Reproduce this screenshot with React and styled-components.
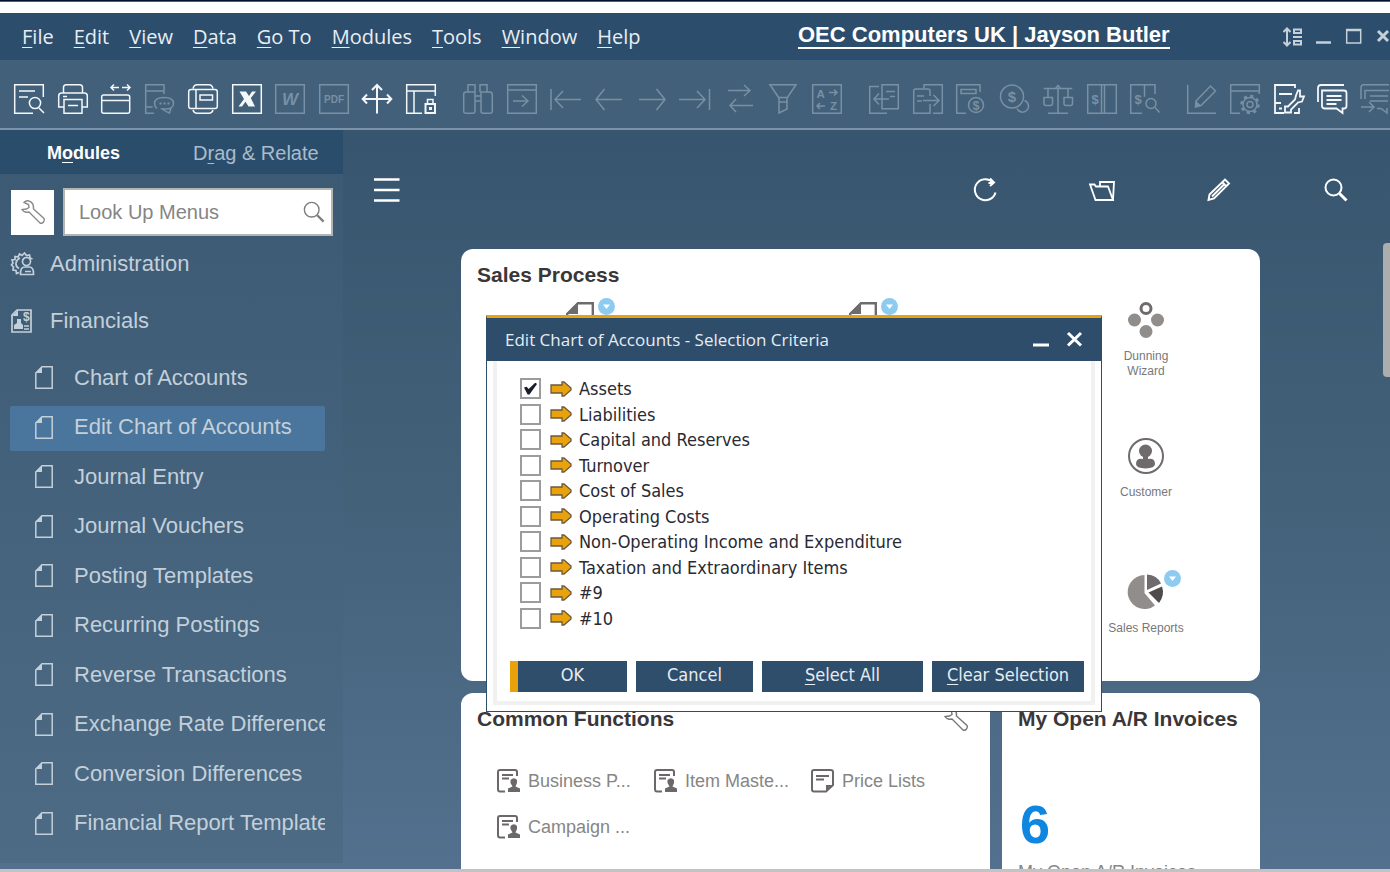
import React, { useState } from 'react';
import styled, { createGlobalStyle } from 'styled-components';

const GlobalStyle = createGlobalStyle`
  * {
    box-sizing: border-box;
  }

  body {
    margin: 0;
    font-family: 'Liberation Sans', Arial, sans-serif;
  }

  button {
    padding: 0;
    border: 0;
    background: none;
    color: inherit;
    font: inherit;
    cursor: pointer;
  }

  ul {
    margin: 0;
    padding: 0;
    list-style: none;
  }

  u {
    text-decoration-thickness: 1px;
    text-underline-offset: 3px;
  }
`;

const Page = styled.div`
  position: relative;
  display: flex;
  flex-direction: column;
  height: 100vh;
  overflow: hidden;
  border-bottom: 3px solid #c3c3c3;
`;

const TitleEdge = styled.div`
  flex: none;
  height: 13px;
  border-top: 1px solid #03122b;
  background: linear-gradient(#1f6cb0 1px, #ffffff 1px);
`;

const MenuBar = styled.header`
  display: flex;
  flex: none;
  align-items: center;
  justify-content: space-between;
  height: 47px;
  padding-left: 22px;
  background: #2c4d6c;
  color: #e9eef3;
`;

const Menus = styled.nav`
  display: flex;
  gap: 20px;
  width: 776px;
  font-family: 'Open Sans', 'Noto Sans', sans-serif;
  font-size: 20px;
  line-height: 28px;
`;

const Company = styled.a`
  margin-right: auto;
  padding-bottom: 2px;
  border-bottom: 2px solid #ffffff;
  color: #ffffff;
  font-size: 22px;
  font-weight: bold;
  line-height: 20px;
  text-decoration: none;
`;

const WindowControls = styled.div`
  display: flex;
  gap: 14px;
  margin-right: -2px;
  color: #c6d0d9;
`;

const Toolbar = styled.div`
  display: flex;
  flex: none;
  gap: 27px;
  height: 70px;
  padding: 24px 0 0 14px;
  overflow: hidden;
  border-bottom: 2px solid #7c92a8;
  background: #426079;
`;

const ToolGroup = styled.div`
  display: flex;
  flex: none;
  justify-content: space-between;
  width: ${({ $width }) => $width}px;
`;

const ToolButton = styled.button`
  width: 30px;
  height: 30px;
  color: ${({ disabled }) => (disabled ? '#7890a5' : '#f4f7fa')};
`;

const Svg = styled.svg`
  display: block;
  fill: none;
  stroke: currentColor;
  stroke-width: ${({ $weight }) => $weight || 1.5};
  overflow: visible;

  text {
    fill: currentColor;
    stroke: none;
    font-family: 'Liberation Sans', sans-serif;
    font-weight: bold;
  }

  .solid {
    fill: currentColor;
    stroke: none;
  }
`;

const Workspace = styled.div`
  display: flex;
  flex: 1;
  min-height: 0;
  background: linear-gradient(#38556f, #436179 50%, #53718e);
`;

const Sidebar = styled.aside`
  flex: none;
  width: 343px;
  margin-bottom: 6px;
  overflow: hidden;
  background: linear-gradient(#3c5973, #44627c 50%, #4d6b84);
`;

const Tabs = styled.div`
  display: flex;
  gap: 73px;
  height: 44px;
  padding: 2px 0 0 47px;
  background: #2b4d6c;
`;

const Tab = styled.button`
  color: ${({ $active }) => ($active ? '#ffffff' : '#a9bccd')};
  font-size: ${({ $active }) => ($active ? 18 : 20)}px;
  font-weight: ${({ $active }) => ($active ? 'bold' : 'normal')};
`;

const Lookup = styled.div`
  display: flex;
  align-items: center;
  gap: 9px;
  padding: 14px 10px 0 11px;
`;

const WrenchButton = styled.button`
  display: grid;
  place-items: center;
  width: 43px;
  height: 45px;
  background: #ffffff;
  color: #8a8a8a;
`;

const SearchField = styled.label`
  display: flex;
  flex: 1;
  align-items: center;
  min-width: 0;
  height: 48px;
  padding: 0 6px 0 14px;
  border: 2px solid #b5b5b0;
  background: #ffffff;
  color: #7d7d7d;
`;

const SearchInput = styled.input`
  flex: 1;
  min-width: 0;
  padding: 0;
  border: 0;
  outline: 0;
  background: none;
  font: 20px 'Liberation Sans', Arial, sans-serif;

  &::placeholder {
    color: #858585;
    opacity: 1;
  }
`;

const ModuleLink = styled.a`
  display: flex;
  align-items: center;
  gap: 15px;
  height: 57px;
  padding: 0 0 2px 11px;
  color: #c3d0da;
  font-size: 22px;
  text-decoration: none;
`;

const SubMenu = styled.ul`
  display: flex;
  flex-direction: column;
  justify-content: space-between;
  height: 491px;
  margin: 6px 18px 0 10px;
`;

const SubLink = styled.a`
  display: flex;
  align-items: center;
  gap: 21px;
  height: 45px;
  padding: 0 0 2px 25px;
  overflow: hidden;
  border-radius: 2px;
  background: ${({ $active }) => ($active ? '#4a759c' : 'transparent')};
  color: #c3d0da;
  font-size: 22px;
  text-decoration: none;
  white-space: nowrap;
`;

const Dashboard = styled.main`
  display: flex;
  flex: 1;
  flex-direction: column;
  min-width: 0;
`;

const DashboardBar = styled.div`
  display: flex;
  flex: none;
  align-items: center;
  gap: 93px;
  height: 119px;
  padding: 0 35px 0 31px;
  color: #ffffff;

  button:first-child {
    margin-right: auto;
  }
`;

const Widgets = styled.div`
  display: grid;
  flex: none;
  grid-template-columns: 1fr 258px;
  gap: 12px;
  padding: 0 123px 0 118px;
`;

const Widget = styled.section`
  grid-column: ${({ $wide }) => ($wide ? '1 / -1' : 'auto')};
  height: ${({ $wide }) => ($wide ? 432 : 220)}px;
  padding: 14px 16px 0;
  border-radius: 12px;
  background: #ffffff;
`;

const WidgetHeader = styled.div`
  display: flex;
  align-items: center;
  justify-content: space-between;
  height: 24px;
  padding-right: 6px;
  color: #777777;
`;

const WidgetTitle = styled.h2`
  margin: 0;
  color: #3b3638;
  font-size: 21px;
  line-height: 24px;
  white-space: nowrap;
`;

const ProcessGrid = styled.div`
  display: grid;
  grid-template-columns: repeat(3, 90px);
  grid-auto-rows: 136px;
  justify-content: space-between;
  padding: 15px 53px 0 58px;
`;

const ProcessItem = styled.a`
  position: relative;
  display: flex;
  flex-direction: column;
  grid-column: ${({ $column }) => $column};
  align-items: center;
  gap: 11px;
  color: #6f6a6b;
  font-size: 12px;
  line-height: 15px;
  text-align: center;
  text-decoration: none;
`;

const ProcessLabel = styled.span`
  width: ${({ $narrow }) => ($narrow ? '50px' : 'auto')};
  color: #77787a;
  white-space: ${({ $narrow }) => ($narrow ? 'normal' : 'nowrap')};
`;

const Badge = styled.span`
  position: absolute;
  top: -4px;
  right: 10px;
`;

const Shortcuts = styled.ul`
  display: grid;
  grid-template-columns: repeat(3, 157px);
  grid-auto-rows: 46px;
  padding: 28px 0 0 20px;
`;

const Shortcut = styled.a`
  display: flex;
  align-items: center;
  gap: 8px;
  height: 44px;
  color: #868686;
  font-size: 18px;
  text-decoration: none;
  white-space: nowrap;

  svg {
    color: #6c686a;
  }
`;

const Count = styled.div`
  margin-top: 60px;
  padding-left: 2px;
  color: #0f87e0;
  font-size: 54px;
  font-weight: bold;
  line-height: 66px;
`;

const CountLabel = styled.div`
  margin-top: 4px;
  color: #868686;
  font-size: 18px;
  line-height: 22px;
`;

const ScrollTrack = styled.div`
  flex: none;
  width: 7px;
  padding-top: 113px;
`;

const ScrollThumb = styled.div`
  height: 134px;
  border-radius: 4px 0 0 4px;
  background: #acaeae;
`;

const Dialog = styled.form`
  position: absolute;
  top: 315px;
  left: 486px;
  width: 616px;
  border: 1px solid #2c4d6c;
  border-top: 3px solid #e9a20c;
  background: #ffffff;
`;

const DialogHeader = styled.div`
  display: flex;
  align-items: center;
  gap: 15px;
  height: 43px;
  padding: 0 18px;
  background: #2d4d6b;
  color: #ffffff;
`;

const DialogTitle = styled.h1`
  margin: 0 auto 0 0;
  color: #e6ecf2;
  font: 17px 'Open Sans', 'Noto Sans', sans-serif;
`;

const DialogBody = styled.div`
  margin: 0 6px 6px;
  padding: 17px 7px 9px 13px;
  border: 4px solid #f1f1f1;
  border-top: 0;
  font-family: 'DejaVu Sans Condensed', 'Noto Sans', sans-serif;
  font-size: 18px;
`;

const CriteriaList = styled.ul`
  display: flex;
  flex-direction: column;
  justify-content: space-between;
  height: 251px;
  margin-left: 10px;
`;

const Criterion = styled.label`
  display: flex;
  align-items: center;
  height: 21px;
  color: #2a2a33;

  svg {
    margin: 0 7px 0 9px;
  }
`;

const CheckBox = styled.input`
  appearance: none;
  display: grid;
  place-items: center;
  width: 21px;
  height: 21px;
  margin: 0;
  border: 2px solid #9c9c9c;
  background: #ffffff;

  &:checked::before {
    content: '';
    width: 13px;
    height: 12px;
    background: #1a1d2b;
    clip-path: polygon(0 42%, 20% 35%, 36% 54%, 88% 0, 100% 12%, 42% 100%, 28% 100%);
  }
`;

const DialogActions = styled.div`
  display: grid;
  grid-template-columns: 117px 117px 161px 152px;
  gap: 9px;
  margin-top: 32px;
`;

const ActionButton = styled.button`
  height: 31px;
  padding-bottom: 3px;
  border-left: ${({ $primary }) => ($primary ? '8px solid #e9a20c' : '0')};
  background: #2e4e6c;
  color: #e6ecf2;
  font-size: 18px;
  line-height: 28px;
`;

const Mnemonic = ({ text, at = 0 }) => (
  <>
    {text.slice(0, at)}
    <u>{text[at]}</u>
    {text.slice(at + 1)}
  </>
);

const icons = {
  preview: (
    <>
      <path d="M29.3 13V.7H.7v28.6H19M5 7h16M5 13h9M25 24l5 5" />
      <circle cx="21" cy="19" r="5.6" />
    </>
  ),
  print: (
    <path d="M5.5 9V3.5q0-2.8 2.8-2.8h13.4q2.8 0 2.8 2.8V9M6 23H.7V12q0-3 3-3h22.6q3 0 3 3v11H24M6 15.5h18v13.8H6zM10 21.5h10M5 12.5h4" />
  ),
  resize: (
    <path d="M.7 28V13q0-2 2-2h24q2 0 2 2v14q0 2.3-2 2.3h-24q-2 0-2-2M.7 16.5h28M10 3.5h8M13 .5l-3 3 3 3M21 3.5h8M26 .5l3 3-3 3" />
  ),
  message: (
    <>
      <path d="M19 10V.7H.7v28.6H9M.7 7h18M.7 23h7M12 24.5q-2.5-2-2.5-5 0-6 9.5-6t9.5 6-9.5 5.5h-2q2 1.5 7.5 4l1.5-5" />
      <path d="M14.5 19.5h2M18.5 19.5h2M22.5 19.5h2" strokeWidth="2" />
    </>
  ),
  fax: (
    <path d="M5 4.5q1-3.8 4-3.8h12q3 0 4 3.8M5 26q1 3.3 4 3.3h12q3 0 4-3.3M8 5.5H3Q.7 5.5.7 7.8v14.4q0 2.3 2.3 2.3h5zM8 5.5h19q2.3 0 2.3 2.3v14.4q0 2.3-2.3 2.3H8M12 11h12.5v5H12z" />
  ),
  excel: (
    <>
      <path d="M.7.7h28.6v28.6H.7z" />
      <path className="solid" d="M7.5 7.5H14l3 4.5 3-4.5h4L18.800 14 23 22.500h-6.500l-3-4.800-3.500 4.800H6.500l5.500-7.500z" />
    </>
  ),
  word: (
    <>
      <path d="M.7.7h28.6v28.6H.7z" />
      <text x="15" y="21" fontSize="17" fontStyle="italic" textAnchor="middle">W</text>
    </>
  ),
  pdf: (
    <>
      <path d="M.7.7h28.6v28.6H.7z" />
      <text x="15" y="18.5" fontSize="10" textAnchor="middle">PDF</text>
    </>
  ),
  move: <path strokeWidth="2" d="M15 1v28.5M.7 15h28.6M10 6l5-5 5 5M5 10.5L.7 15 5 19.5M25 10.5l4.3 4.5-4.3 4.5" />,
  lockLayout: (
    <>
      <path d="M29.3 12V.7H.7v28.6H16M.7 7h28.6M8 7v22M21.5 20v-4.5H27V20" />
      <path d="M19.5 20H29v9h-9.5z" strokeWidth="2" />
      <path className="solid" d="M23 23h3v3h-3z" />
    </>
  ),
  find: (
    <path d="M5 8V.7h7V8M17 8V.7h7V8M12 12v15q0 2.3-2 2.3H3Q.7 29.300.7 27V10.5Q.7 8 3 8h9v4h6V8h8.5q2.800 0 2.800 2.500V27q0 2.300-2.300 2.300h-7q-2 0-2-2V12M12 17h6" />
  ),
  add: <path d="M.7.7h28.6v28.6H.7zM.7 6h28.6M6 17h15M15 11.5l6 5.5-6 5.5" />,
  first: <path d="M1 5v21M5 15.5h26M13 7l-8 8.5 8 8.5" />,
  previous: <path d="M2 15.5h26M10.5 5L2 15.5 10.5 26" />,
  next: <path d="M1 15.5h26M18.5 5L27 15.5 18.5 26" />,
  last: <path d="M-2 15.5h26M16 7l8 8.5-8 8.5M28.5 5v21" />,
  refresh: <path d="M3 6.5h22M19 1l6 5.5-6 5.5M28 21.5H5M11 15l-6 6.5 6 6.5" />,
  filter: <path d="M2 .7h26L19 14v11l-8 4V14zM11 13.5h8M11 18h8" />,
  sort: (
    <>
      <path d="M.7.7h28.6v28.6H.7zM17 8.5h8M22 5.5l3 3-3 3M13 22H5M8 19l-3 3 3 3" />
      <text x="4.5" y="14" fontSize="11.5">A</text>
      <text x="18" y="26" fontSize="11.5">Z</text>
    </>
  ),
  baseDoc: <path d="M10 2.5H.7v26.8H18M13 .7h16.3v24H13zM17 7.5h9M21 12.5h5M20 15H5M10 9.5L5 15l5 5.5" />,
  targetDoc: <path d="M11 4V.7h18.3v28.6H20M17 12V7q0-2-2-2H2.7q-2 0-2 2v22.3H17V20M4 12h7M4 17h5M10 16.5h16M20.5 11l5.5 5.5-5.5 5.5" />,
  grossProfit: (
    <>
      <path d="M24 8V.7H.7v28.6H10M5 5.5h15v4H5z" />
      <circle cx="20" cy="21" r="7.5" />
      <text x="20" y="25.5" fontSize="12" textAnchor="middle">$</text>
    </>
  ),
  payment: (
    <>
      <circle cx="12" cy="12.5" r="11.5" />
      <path d="M24.5 16.5a6 6 0 1 1-7.5 8" />
      <text x="12" y="18" fontSize="15" textAnchor="middle">$</text>
    </>
  ),
  balance: (
    <path d="M.7 4.5h28.6M15 4.5v25M5 29.3h20M5 4.5v9M1 13.5h8.5v6q0 2-2 2H3q-2 0-2-2zM25 4.5v9M21 13.5h8.500v6q0 2-2 2H23q-2 0-2-2zM12.500 4.500L15 1.500l2.500 3" />
  ),
  ledger: (
    <>
      <path d="M.7.7h28.6v28.6H.7zM14.5.7v28.6M17.5.7v28.6" />
      <text x="8" y="20" fontSize="13" textAnchor="middle">$</text>
    </>
  ),
  ledgerFind: (
    <>
      <path d="M25 10V.7H.7v28.6H12M14.5.7v12M25 23.5l4.5 5" />
      <circle cx="21" cy="19.5" r="5" />
      <text x="8" y="20" fontSize="13" textAnchor="middle">$</text>
    </>
  ),
  edit: (
    <>
      <path d="M.7.7v28.6H29M9 17L23.500 2l5 5L14 21.500 8.500 23z" />
      <path className="solid" d="M9 17l5 4.500L8.500 23z" />
    </>
  ),
  formSettings: (
    <>
      <path d="M29.3 10V.7H.7v28.6H10M.7 7h28.6" />
      <circle cx="20" cy="20.5" r="3" />
      <circle cx="20" cy="20.5" r="7" />
      <circle cx="20" cy="20.5" r="8.5" strokeWidth="2.5" strokeDasharray="3.2 3.47" />
    </>
  ),
  formTool: (
    <path strokeWidth="1.8" d="M21 4V1H1v28h9M5 10h13M1 19h6M5 24.5h3M24 6.5l-2 5-1 4-7 7h-3v6h6v-3l7-7 4-1 2-5h-4v-6zM20 29h5v-5" />
  ),
  chat: (
    <path strokeWidth="1.8" d="M1 18V4q0-3 3-3h23M5 6.500h22q2.500 0 2.500 2.500v13q0 2.500-2.500 2.500h-1.500V29l-6-4.500H8q-3 0-3-2.500zM9.500 12h15M9.500 16h15M9.500 20h10" />
  ),
  chatForward: <path d="M1 15V3.5Q1 .7 3.500.7H29M5 15V6.500h24M10 12h18M10 17h18M1 23h13M9 18l5 5-5 5M17 24.500h4l6 4.500v-5" />,
};

// a leading dash marks a disabled tool
const toolGroups = [
  { width: 422, names: ['preview', 'print', 'resize', '-message', 'fax', 'excel', '-word', '-pdf', 'move', 'lockLayout'] },
  { width: 379, names: ['-find', '-add', '-first', '-previous', '-next', '-last', '-refresh', '-filter', '-sort'] },
  { width: 291, names: ['-baseDoc', '-targetDoc', '-grossProfit', '-payment', '-balance', '-ledger', '-ledgerFind'] },
  { width: 203, names: ['-edit', '-formSettings', 'formTool', 'chat', '-chatForward'] },
];

const menus = ['File', 'Edit', 'View', 'Data', 'Go To', 'Modules', 'Tools', 'Window', 'Help'];

const financials = [
  'Chart of Accounts',
  'Edit Chart of Accounts',
  'Journal Entry',
  'Journal Vouchers',
  'Posting Templates',
  'Recurring Postings',
  'Reverse Transactions',
  'Exchange Rate Differences',
  'Conversion Differences',
  'Financial Report Templates',
];

const criteria = [
  'Assets',
  'Liabilities',
  'Capital and Reserves',
  'Turnover',
  'Cost of Sales',
  'Operating Costs',
  'Non-Operating Income and Expenditure',
  'Taxation and Extraordinary Items',
  '#9',
  '#10',
];

const WrenchIcon = () => (
  <Svg width="24" height="24" viewBox="0 0 24 24" $weight={1.4}>
    <path d="M1 9.500q2 3.500 7 2.500L19 23q2 1 3.500-1t.5-3.500L12.500 9Q13 2.500 8 1 5 0 3 2.500L7.500 4.500 8 7.500 5.500 9z" />
  </Svg>
);

const SearchIcon = ({ size = 24, weight }) => (
  <Svg width={size} height={size} viewBox="0 0 24 24" $weight={weight}>
    <circle cx="9.5" cy="9.5" r="8" />
    <path d="M15.5 15.5l7 7" strokeWidth={weight + 1} />
  </Svg>
);

const PageIcon = () => (
  <Svg width="18" height="23" viewBox="0 0 18 23">
    <path d="M7 .8h10.2v21.4H.8V7z" />
    <path className="solid" d="M7 .5V7H.5z" />
  </Svg>
);

const AdminIcon = () => (
  <Svg width="24" height="24" viewBox="0 0 24 24" $weight={1.7}>
    <path d="M8 20.500l-2.500 1-.5-3-3-.5.5-3L.5 13l1.500-2-1-3 3-.5v-3l3 .5 1.500-3L11 3.500 13.500 1l2 2.500 3-.5.5 3 2.500 1M8 16.500q-3.500-2-3-5.500t4-5" />
    <circle cx="15.5" cy="9.5" r="4" />
    <path d="M9.500 22.500Q9 15 14 15h4q5 0 4.500 7.500zM14 19.500h6" />
  </Svg>
);

const FinancialsIcon = () => (
  <Svg width="24" height="24" viewBox="0 0 24 24" $weight={1.7}>
    <path d="M6 1h14v22H1V6zM13 20h5M13 17h5" />
    <path className="solid" d="M7 1v6H1zM3 20v-4l3-2v-4h4v4l2 2v4z" />
    <text x="12" y="12" fontSize="12">$</text>
  </Svg>
);

const DropBadge = () => (
  <Badge>
    <Svg width="17" height="17" viewBox="0 0 17 17">
      <circle cx="8.5" cy="8.5" r="8.5" fill="#8ecbf1" stroke="none" />
      <path d="M5 6.5h7L8.500 11z" fill="#ffffff" stroke="none" />
    </Svg>
  </Badge>
);

const DocumentIcon = () => (
  <Svg width="28" height="36" viewBox="0 0 28 36" $weight={2.4}>
    <path d="M12 1.2h14.800V35H1.200V12z" />
    <path className="solid" d="M12 0v12H0z" />
  </Svg>
);

const DunningIcon = () => (
  <Svg width="36" height="36" viewBox="0 0 36 36" $weight={3}>
    <circle cx="18" cy="6.5" r="5" />
    <g fill="#918d8b" stroke="none">
      <circle cx="6.5" cy="18" r="6.5" />
      <circle cx="29.5" cy="18" r="6.5" />
      <circle cx="18" cy="29.5" r="6.5" />
    </g>
  </Svg>
);

const CustomerIcon = () => (
  <Svg width="36" height="36" viewBox="0 0 36 36" $weight={2}>
    <circle cx="18" cy="18" r="17" />
    <circle className="solid" cx="17.5" cy="13" r="6.5" />
    <path className="solid" d="M15 17h5v4q7-1 7 5 0 4-9.500 4.500Q8 30 8 26q0-6 7-5z" />
  </Svg>
);

const ReportsIcon = () => (
  <Svg width="36" height="36" viewBox="0 0 36 36">
    <path d="M16.500 1v18L27 31.500A17 17 0 1 1 16.500 1z" fill="#918d8b" stroke="none" />
    <path className="solid" d="M19 .5V16l14-6.500Q29 1 19 .5z" />
    <path d="M34 12.500l-13.500 6L31 29q6-8 3-16.500z" fill="#504a4c" stroke="none" />
  </Svg>
);

const MasterIcon = () => (
  <Svg width="23" height="24" viewBox="0 0 23 24" $weight={2}>
    <path d="M20 7V3q0-2-2-2H3Q1 1 1 3v17q0 2.500 2 2.500h5M5 6h11M5 9.500h7" />
    <path className="solid" d="M13.500 11q3.500-3.500 6.500 0v3l-1.500 3.500 4.500 2V23H11v-3.500l4.500-2-2-3.500z" />
  </Svg>
);

const PriceListIcon = () => (
  <Svg width="23" height="24" viewBox="0 0 23 24" $weight={2}>
    <path d="M15 22.500H3q-2 0-2-2V3q0-2 2-2h16.500Q22 1 22 3v13zM5 7h13M5 10.500h8" />
    <path className="solid" d="M15 16h7l-7 7z" />
  </Svg>
);

const ArrowIcon = () => (
  <Svg width="22" height="16" viewBox="0 0 22 16" $weight={1.3} aria-hidden="true">
    <path d="M1 4h11V1h2l7 6v2l-7 6h-2v-3H1z" fill="#e9a20c" stroke="#6b5a3c" />
  </Svg>
);

const WindowButtons = () => (
  <WindowControls>
    <button type="button" aria-label="Arrange">
      <Svg width="20" height="20" viewBox="0 0 20 20" $weight={2}>
        <path d="M5 2v16M1.500 5L5 1.500 8.500 5M1.500 15L5 18.500 8.500 15M12 2.500h7v3.500h-7zM11 10h9M12 14h7v3.500h-7z" />
      </Svg>
    </button>
    <button type="button" aria-label="Minimize">
      <Svg width="16" height="20" viewBox="0 0 16 20" $weight={2.5}>
        <path d="M0 15.500h15" />
      </Svg>
    </button>
    <button type="button" aria-label="Maximize">
      <Svg width="16" height="20" viewBox="0 0 16 20">
        <path d="M.7 2.500h14V16H.7zM.7 3.500h14" />
      </Svg>
    </button>
    <button type="button" aria-label="Close">
      <Svg width="16" height="20" viewBox="0 0 16 20" $weight={3}>
        <path d="M2 4l10 10M12 4L2 14" />
      </Svg>
    </button>
  </WindowControls>
);

const SelectionDialog = () => {
  const [selected, setSelected] = useState(['Assets']);

  const toggle = (name) => {
    setSelected(selected.includes(name) ? selected.filter((item) => item !== name) : [...selected, name]);
  };

  return (
    <Dialog role="dialog" aria-labelledby="dialog-title" onSubmit={(e) => e.preventDefault()}>
      <DialogHeader>
        <DialogTitle id="dialog-title">Edit Chart of Accounts - Selection Criteria</DialogTitle>
        <button type="button" aria-label="Minimize">
          <Svg width="18" height="18" viewBox="0 0 18 18" $weight={3}>
            <path d="M1 14h16" />
          </Svg>
        </button>
        <button type="button" aria-label="Close">
          <Svg width="18" height="18" viewBox="0 0 18 18" $weight={3}>
            <path d="M3 2l13 12.500M16 2L3 14.500" />
          </Svg>
        </button>
      </DialogHeader>
      <DialogBody>
        <CriteriaList>
          {criteria.map((name) => (
            <li key={name}>
              <Criterion>
                <CheckBox type="checkbox" checked={selected.includes(name)} onChange={() => toggle(name)} />
                <ArrowIcon />
                {name}
              </Criterion>
            </li>
          ))}
        </CriteriaList>
        <DialogActions>
          <ActionButton type="submit" $primary>OK</ActionButton>
          <ActionButton type="button">Cancel</ActionButton>
          <ActionButton type="button" onClick={() => setSelected(criteria)}>
            <Mnemonic text="Select All" />
          </ActionButton>
          <ActionButton type="button" onClick={() => setSelected([])}>
            <Mnemonic text="Clear Selection" />
          </ActionButton>
        </DialogActions>
      </DialogBody>
    </Dialog>
  );
};

const App = () => (
  <Page>
    <GlobalStyle />
    <TitleEdge />
    <MenuBar>
      <Menus>
        {menus.map((menu) => (
          <button type="button" key={menu}>
            <Mnemonic text={menu} />
          </button>
        ))}
      </Menus>
      <Company href="#company">OEC Computers UK | Jayson Butler</Company>
      <WindowButtons />
    </MenuBar>

    <Toolbar>
      {toolGroups.map(({ width, names }) => (
        <ToolGroup key={names[0]} $width={width}>
          {names.map((entry) => {
            const name = entry.replace('-', '');
            return (
              <ToolButton type="button" key={name} aria-label={name} disabled={entry !== name}>
                <Svg width="30" height="30" viewBox="0 0 30 30">{icons[name]}</Svg>
              </ToolButton>
            );
          })}
        </ToolGroup>
      ))}
    </Toolbar>

    <Workspace>
      <Sidebar>
        <Tabs>
          <Tab type="button" $active>
            <Mnemonic text="Modules" at={1} />
          </Tab>
          <Tab type="button">
            <Mnemonic text="Drag & Relate" at={1} />
          </Tab>
        </Tabs>
        <Lookup>
          <WrenchButton type="button" aria-label="Menu settings">
            <WrenchIcon />
          </WrenchButton>
          <SearchField>
            <SearchInput type="text" placeholder="Look Up Menus" aria-label="Look Up Menus" />
            <SearchIcon size={22} weight={1.5} />
          </SearchField>
        </Lookup>
        <ModuleLink href="#administration">
          <AdminIcon />
          Administration
        </ModuleLink>
        <ModuleLink href="#financials">
          <FinancialsIcon />
          Financials
        </ModuleLink>
        <SubMenu>
          {financials.map((item) => (
            <li key={item}>
              <SubLink href="#financials" $active={item === 'Edit Chart of Accounts'}>
                <PageIcon />
                {item}
              </SubLink>
            </li>
          ))}
        </SubMenu>
      </Sidebar>

      <Dashboard>
        <DashboardBar>
          <button type="button" aria-label="Menu">
            <Svg width="26" height="26" viewBox="0 0 26 26" $weight={2.5}>
              <path d="M0 2.500h25.500M0 13h25.500M0 23.500h25.500" />
            </Svg>
          </button>
          <button type="button" aria-label="Refresh">
            <Svg width="24" height="24" viewBox="0 0 24 24" $weight={2}>
              <path d="M22.500 14.500A10.500 10.500 0 1 1 20 4.500M15.500 5h5M17 .5l4 4L17 8" />
            </Svg>
          </button>
          <button type="button" aria-label="Open">
            <Svg width="24" height="24" viewBox="0 0 24 24" $weight={1.8}>
              <path d="M0 6.500h4.500L6 8.500h12L23 22H5.500zM10 8V4h14l-1 18" />
            </Svg>
          </button>
          <button type="button" aria-label="Edit">
            <Svg width="24" height="24" viewBox="0 0 24 24" $weight={1.9}>
              <path d="M2.500 16.500L18 1.500l4 4L7 20.500l-5.500 1.500zM15.500 4.500l4 4M5 18.500l13-13" />
            </Svg>
          </button>
          <button type="button" aria-label="Search">
            <SearchIcon weight={2} />
          </button>
        </DashboardBar>

        <Widgets>
          <Widget $wide>
            <WidgetHeader>
              <WidgetTitle>Sales Process</WidgetTitle>
            </WidgetHeader>
            <ProcessGrid>
              <ProcessItem href="#process" $column={1} aria-label="Document">
                <DocumentIcon />
                <DropBadge />
              </ProcessItem>
              <ProcessItem href="#process" $column={2} aria-label="Document">
                <DocumentIcon />
                <DropBadge />
              </ProcessItem>
              <ProcessItem href="#dunning" $column={3}>
                <DunningIcon />
                <ProcessLabel $narrow>Dunning Wizard</ProcessLabel>
              </ProcessItem>
              <ProcessItem href="#customer" $column={3}>
                <CustomerIcon />
                <ProcessLabel>Customer</ProcessLabel>
              </ProcessItem>
              <ProcessItem href="#reports" $column={3}>
                <ReportsIcon />
                <DropBadge />
                <ProcessLabel>Sales Reports</ProcessLabel>
              </ProcessItem>
            </ProcessGrid>
          </Widget>

          <Widget>
            <WidgetHeader>
              <WidgetTitle>Common Functions</WidgetTitle>
              <button type="button" aria-label="Settings">
                <WrenchIcon />
              </button>
            </WidgetHeader>
            <Shortcuts>
              <li>
                <Shortcut href="#partners">
                  <MasterIcon />
                  Business P...
                </Shortcut>
              </li>
              <li>
                <Shortcut href="#items">
                  <MasterIcon />
                  Item Maste...
                </Shortcut>
              </li>
              <li>
                <Shortcut href="#prices">
                  <PriceListIcon />
                  Price Lists
                </Shortcut>
              </li>
              <li>
                <Shortcut href="#campaign">
                  <MasterIcon />
                  Campaign ...
                </Shortcut>
              </li>
            </Shortcuts>
          </Widget>

          <Widget>
            <WidgetHeader>
              <WidgetTitle>My Open A/R Invoices</WidgetTitle>
            </WidgetHeader>
            <Count>6</Count>
            <CountLabel>My Open A/R Invoices</CountLabel>
          </Widget>
        </Widgets>
      </Dashboard>

      <ScrollTrack>
        <ScrollThumb />
      </ScrollTrack>
    </Workspace>

    <SelectionDialog />
  </Page>
);

export default App;
